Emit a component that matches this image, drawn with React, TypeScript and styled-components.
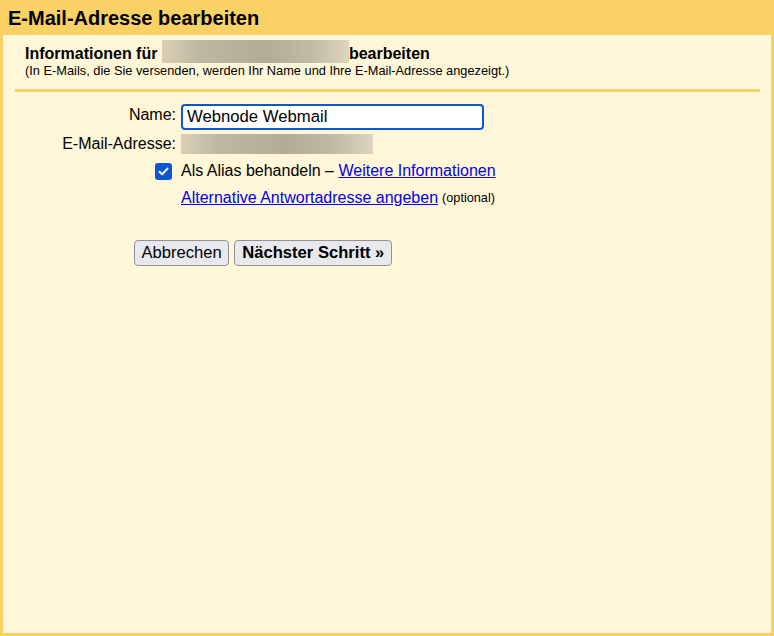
import React from "react";
import styled, { createGlobalStyle } from "styled-components";

const Global = createGlobalStyle`
  html, body { margin: 0; padding: 0; }
  body { font-family: Arial, "Liberation Sans", sans-serif; color: #000; }
`;

const Frame = styled.div`
  width: 774px;
  height: 636px;
  box-sizing: border-box;
  background: #fad165;
  padding: 0 3px 3px 3px;
  display: flex;
  flex-direction: column;
`;

const Title = styled.h1`
  margin: 0;
  height: 35px;
  box-sizing: border-box;
  padding: 6px 0 0 5px;
  font-size: 20px;
  font-weight: bold;
  line-height: 24px;
`;

const Panel = styled.div`
  flex: 1;
  background: #fff7d7;
  padding: 5px 11px 0 12px;
  display: flex;
  flex-direction: column;
`;

const InfoHead = styled.div`
  padding: 0 0 0 10px;
`;

const InfoTitle = styled.div`
  display: flex;
  align-items: flex-end;
  font-size: 16px;
  line-height: 19px;
  font-weight: bold;
  height: 23px;
  white-space: nowrap;
`;

const Blur = styled.span<{ $w: number; $h: number }>`
  display: inline-block;
  flex: none;
  width: ${(p) => p.$w}px;
  height: ${(p) => p.$h}px;
  background: linear-gradient(
    90deg,
    #d8cfb6 0%,
    #bfb8a0 20%,
    #b3ab94 55%,
    #c2baa2 80%,
    #ddd5bd 100%
  );
`;

const InfoNote = styled.div`
  font-size: 12.8px;
  line-height: 14px;
  margin-top: 1px;
  white-space: nowrap;
`;

const Rule = styled.div`
  height: 3px;
  background: #fad165;
  margin-top: 11px;
`;

const Form = styled.div`
  display: grid;
  grid-template-columns: 173px 1fr;
  column-gap: 5px;
  margin-top: 12px;
  margin-left: -12px;
  font-size: 16px;
`;

const Label = styled.div<{ $top?: boolean }>`
  text-align: right;
  align-self: ${(p) => (p.$top ? "start" : "center")};
  padding-top: ${(p) => (p.$top ? "2px" : "0")};
  white-space: nowrap;
`;

const Cell = styled.div<{ $h: number }>`
  height: ${(p) => p.$h}px;
  display: flex;
  align-items: center;
  white-space: nowrap;
`;

const Input = styled.input`
  width: 303px;
  height: 26px;
  box-sizing: border-box;
  border: 2px solid #0b57d0;
  border-radius: 4px;
  background: #fff;
  font-family: Arial, "Liberation Sans", sans-serif;
  font-size: 16.7px;
  padding: 0 4px;
  outline: none;
  color: #000;
`;

const CheckCell = styled.div`
  display: flex;
  justify-content: flex-end;
  align-items: center;
  padding-right: 4px;
`;

const Check = styled.span`
  width: 17px;
  height: 17px;
  box-sizing: border-box;
  border-radius: 3px;
  background: #0b57d0;
  display: inline-flex;
  align-items: center;
  justify-content: center;
`;

const Link = styled.a`
  color: #0000ee;
  text-decoration: underline;
  cursor: pointer;
`;

const Small = styled.span`
  font-size: 12.7px;
  margin-left: 4px;
`;

const Buttons = styled.div`
  display: flex;
  gap: 5px;
  margin-top: 28px;
  margin-left: 119px;
`;

const Button = styled.button<{ $primary?: boolean }>`
  height: 26px;
  box-sizing: border-box;
  border: 1px solid #8f8f9d;
  border-radius: 4px;
  background: #e9e9ed;
  font-family: Arial, "Liberation Sans", sans-serif;
  font-size: 16.6px;
  font-weight: ${(p) => (p.$primary ? "bold" : "normal")};
  padding: 0 ${(p) => (p.$primary ? "7px" : "6.5px")};
  color: #000;
`;

export default function App() {
  return (
    <>
      <Global />
      <Frame>
        <Title>E-Mail-Adresse bearbeiten</Title>
        <Panel>
          <InfoHead>
            <InfoTitle>
              Informationen für&nbsp;
              <Blur $w={187} $h={23} />
              bearbeiten
            </InfoTitle>
            <InfoNote>
              (In E-Mails, die Sie versenden, werden Ihr Name und Ihre E-Mail-Adresse angezeigt.)
            </InfoNote>
          </InfoHead>
          <Rule />
          <Form>
            <Label $top>Name:</Label>
            <Cell $h={26}>
              <Input defaultValue="Webnode Webmail" />
            </Cell>
            <Label>E-Mail-Adresse:</Label>
            <Cell $h={28}>
              <Blur $w={192} $h={20} />
            </Cell>
            <CheckCell>
              <Check>
                <svg width="13" height="13" viewBox="0 0 13 13">
                  <path d="M2.5 6.8 L5.2 9.3 L10.5 3.6" fill="none" stroke="#fff" strokeWidth="2" strokeLinecap="round" strokeLinejoin="round" />
                </svg>
              </Check>
            </CheckCell>
            <Cell $h={26}>
              Als Alias behandeln –&nbsp;<Link>Weitere Informationen</Link>
            </Cell>
            <div />
            <Cell $h={28}>
              <Link>Alternative Antwortadresse angeben</Link>
              <Small>(optional)</Small>
            </Cell>
          </Form>
          <Buttons>
            <Button>Abbrechen</Button>
            <Button $primary>Nächster Schritt »</Button>
          </Buttons>
        </Panel>
      </Frame>
    </>
  );
}
